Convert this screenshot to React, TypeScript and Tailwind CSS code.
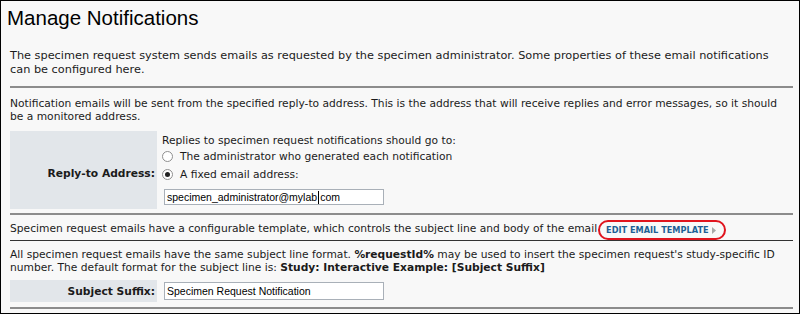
export default function App() {
  return (
    <div className="w-[800px] h-[314px] overflow-hidden bg-[#f8f8f8] border border-black text-[#1b1b1b] font-['DejaVu_Sans',Verdana,sans-serif] text-[10.7px] leading-[13px]">
      <h1 className="font-['Liberation_Sans',Arial,sans-serif] text-[20.5px] leading-[24px] pl-[6px] pt-[5px] text-black font-normal">
        Manage Notifications
      </h1>
      <div className="pl-[9px] pr-[6px]">
        <p className="mt-[19px] pr-[16px] text-[11.3px] leading-[13.5px]">
          The specimen request system sends emails as requested by the specimen administrator. Some properties of these email notifications can be configured here.
        </p>
        <div className="mt-[10px] h-[2px] bg-[#8c8c8c]" />
        <p className="mt-[8.5px]">
          Notification emails will be sent from the specified reply-to address. This is the address that will receive replies and error messages, so it should be a monitored address.
        </p>
        <div className="mt-[8.5px] flex h-[78px]">
          <div className="w-[147px] bg-[#e2e6ea] flex items-center justify-end pr-[2px] pt-[6px] font-bold">
            Reply-to Address:
          </div>
          <div className="pl-[5px] pt-[3px] flex flex-col">
            <div>Replies to specimen request notifications should go to:</div>
            <div className="h-[18px] flex items-center">
              <span className="w-[11px] h-[11px] rounded-full border border-[#8f8f8f] bg-white" />
              <span className="ml-[7px]">The administrator who generated each notification</span>
            </div>
            <div className="h-[18px] flex items-center">
              <span className="w-[11px] h-[11px] rounded-full border border-[#8f8f8f] bg-white flex items-center justify-center">
                <span className="w-[5px] h-[5px] rounded-full bg-[#222]" />
              </span>
              <span className="ml-[7px]">A fixed email address:</span>
            </div>
            <div className="mt-[6px] ml-[2px] w-[220px] h-[16px] border border-[#a9b0b8] bg-white flex items-center pl-[2px] font-['Liberation_Sans',Arial,sans-serif] text-[10.5px] text-black">
              <span>specimen_administrator@mylab</span>
              <span className="w-[1px] h-[13px] bg-black mx-[1px]" />
              <span>com</span>
            </div>
          </div>
        </div>
        <div className="mt-[4px] h-[2px] bg-[#8c8c8c]" />
        <div className="mt-[5px] h-[20px] flex items-start">
          <span className="pt-[1.5px]">
            Specimen request emails have a configurable template, which controls the subject line and body of the email
          </span>
          <span className="ml-[1px] h-[20px] rounded-full border-2 border-[#e0141e] flex items-center pl-[6px] pr-[8px] gap-[3px]">
            <span className="font-bold text-[8.2px] text-[#1d5f95]">EDIT EMAIL TEMPLATE</span>
            <svg width="4" height="7" viewBox="0 0 4 7">
              <path d="M0 0 L4 3.5 L0 7 Z" fill="#a8a8a8" />
            </svg>
          </span>
        </div>
        <div className="h-[1px] bg-[#333]" />
        <p className="mt-[7px]">
          All specimen request emails have the same subject line format. <b>%requestId%</b> may be used to insert the specimen request's study-specific ID number. The default format for the subject line is: <b>Study: Interactive Example: [Subject Suffix]</b>
        </p>
        <div className="mt-[6px] flex h-[22px]">
          <div className="w-[147px] bg-[#e2e6ea] flex items-center justify-end pr-[2px] font-bold">
            Subject Suffix:
          </div>
          <div className="pl-[7px] flex items-center">
            <div className="w-[220px] h-[18px] border border-[#a9b0b8] bg-white flex items-center pl-[2px] font-['Liberation_Sans',Arial,sans-serif] text-[10.5px] text-black">
              Specimen Request Notification
            </div>
          </div>
        </div>
        <div className="mt-[5px] h-[2px] bg-[#8c8c8c]" />
      </div>
    </div>
  );
}
